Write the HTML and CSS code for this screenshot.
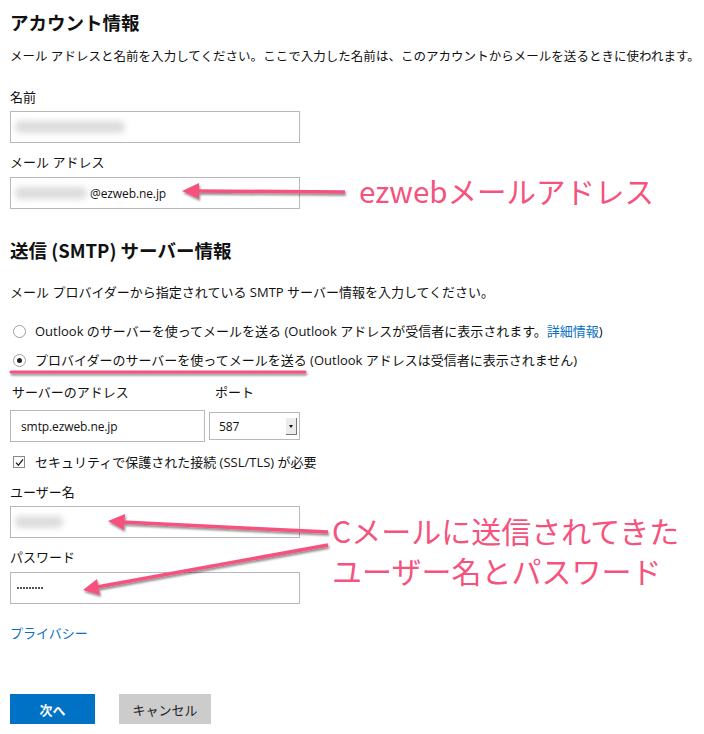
FILE: index.html
```html
<!DOCTYPE html>
<html lang="ja">
<head>
  <meta charset="UTF-8">
  <meta name="viewport" content="width=device-width, initial-scale=1.0">
  <title>アカウント情報</title>
  <link rel="stylesheet" href="styles.css">
</head>
<body>

  <div class="page">
      <h1>アカウント情報</h1>
      <p class="desc">メール アドレスと名前を入力してください。ここで入力した名前は、このアカウントからメールを送るときに使われます。</p>

      <div class="field first">
          <label>名前</label>
          <div class="box"><span class="blur name-blur"></span></div>
      </div>

      <div class="field">
          <label>メール アドレス</label>
          <div class="box"><span class="blur mail-blur"></span><span class="val">@ezweb.ne.jp</span></div>
      </div>

      <h2>送信 (SMTP) サーバー情報</h2>
      <p class="desc desc2">メール プロバイダーから指定されている SMTP サーバー情報を入力してください。</p>

      <div class="option first-option">
          <span class="radio"></span>
          <span>Outlook のサーバーを使ってメールを送る (Outlook アドレスが受信者に表示されます。<a href="#">詳細情報</a>)</span>
      </div>
      <div class="option">
          <span class="radio checked"></span>
          <span>プロバイダーのサーバーを使ってメールを送る (Outlook アドレスは受信者に表示されません)</span>
      </div>

      <div class="server-row">
          <div class="server-col">
              <label>サーバーのアドレス</label>
              <div class="box server-box"><span class="val">smtp.ezweb.ne.jp</span></div>
          </div>
          <div class="port-col">
              <label>ポート</label>
              <div class="select"><span class="val">587</span><span class="drop"></span></div>
          </div>
      </div>

      <div class="option check-row">
          <span class="check">
              <svg width="9" height="9" viewBox="0 0 9 9"><path d="M1 4.6 L3.4 7.2 L8 1.4" fill="none" stroke="#222" stroke-width="1.3"/></svg>
          </span>
          <span>セキュリティで保護された接続 (SSL/TLS) が必要</span>
      </div>

      <div class="field user-field">
          <label>ユーザー名</label>
          <div class="box"><span class="blur user-blur"></span></div>
      </div>

      <div class="field">
          <label>パスワード</label>
          <div class="box"><span class="dots"></span></div>
      </div>

      <a href="#" class="privacy">プライバシー</a>

      <div class="buttons">
          <button class="btn next">次へ</button>
          <button class="btn cancel">キャンセル</button>
      </div>
  </div>

  <!-- pink annotations drawn on top of the screenshot -->
  <div class="notes">
      <svg class="arrows" width="704" height="734" viewBox="0 0 704 734">
          <defs>
              <filter id="shade" x="-10%" y="-50%" width="120%" height="200%">
                  <feDropShadow dx="1" dy="2" stdDeviation="1" flood-color="#000" flood-opacity="0.45"/>
              </filter>
          </defs>
          <g filter="url(#shade)" fill="#f5527d" stroke="#f5527d">
              <line x1="11" y1="372" x2="305" y2="372" stroke-width="3" stroke-linecap="round"/>
              <line x1="196" y1="191" x2="345" y2="192" stroke-width="3.5"/>
              <polygon points="182,191 199,183 199,199" stroke="none"/>
              <line x1="122" y1="522" x2="328" y2="532" stroke-width="3.5"/>
              <polygon points="108,521 125,514 124,530" stroke="none"/>
              <line x1="97" y1="587" x2="328" y2="545" stroke-width="3.5"/>
              <polygon points="83,590 97,579 100,595" stroke="none"/>
          </g>
      </svg>
      <p class="note note-mail">ezwebメールアドレス</p>
      <p class="note note-user">Cメールに送信されてきた<br>ユーザー名とパスワード</p>
  </div>

</body>
</html>
```

FILE: styles.css
```css
* {
  margin: 0;
  padding: 0;
  box-sizing: border-box;
}

body {
  font-family: "Open Sans", "Noto Sans CJK JP", sans-serif;
  font-size: 13px;
  color: #111;
  background-color: white;
  position: relative;
  width: 704px;
  height: 734px;
  overflow: hidden;
}

.page {
  padding: 10px 0 0 10px;
}

h1, h2 {
  font-family: "Noto Sans CJK JP", sans-serif;
  font-size: 18.5px;
  font-weight: bold;
  line-height: 24px;
  color: #111;
}

h2 {
  margin-top: 29px;
}

.desc {
  font-size: 12.5px;
  line-height: 20px;
  margin-top: 13px;
  letter-spacing: 0.03px;
}

.desc2 {
  font-size: 13px;
  letter-spacing: 0;
  margin-top: 20px;
}

.field {
  margin-top: 9px;
}

.field.first {
  margin-top: 20px;
}

.field label,
.server-row label {
  display: block;
  line-height: 20px;
  margin-bottom: 5px;
}

.field.first label {
  margin-bottom: 4px;
}

.box {
  width: 290px;
  height: 32px;
  border: 1px solid #b9b9b9;
  display: flex;
  align-items: center;
  padding-left: 4px;
}

.val {
  font-size: 12px;
  letter-spacing: -0.1px;
}

.blur {
  display: inline-block;
  height: 12px;
  background-color: #dcdcdc;
  border-radius: 5px;
  filter: blur(3px);
}

.name-blur {
  width: 110px;
}

.mail-blur {
  width: 72px;
  margin-right: 3px;
}

.user-blur {
  width: 48px;
}

.dots {
  display: inline-block;
  width: 26px;
  height: 2px;
  margin-left: 2px;
  background: repeating-linear-gradient(to right, #555 0 2px, transparent 2px 3px);
}

.option {
  display: flex;
  align-items: center;
  line-height: 20px;
  margin-top: 9px;
}

.first-option {
  margin-top: 19px;
}

.radio {
  width: 13px;
  height: 13px;
  border: 1px solid #a0a0a0;
  border-radius: 50%;
  margin: 0 9px 0 3px;
  display: flex;
  justify-content: center;
  align-items: center;
}

.radio.checked::after {
  content: "";
  width: 5px;
  height: 5px;
  border-radius: 50%;
  background-color: #222;
}

.option a,
.privacy {
  color: #0a6fc4;
  text-decoration: none;
}

.server-row {
  display: flex;
  align-items: flex-end;
  margin-top: 12px;
}

.server-row label {
  padding-left: 2px;
  margin-bottom: 8px;
}

.server-box {
  width: 195px;
  padding-left: 10px;
}

.port-col {
  margin-left: 4px;
  padding-bottom: 2px;
}

.port-col label {
  padding-left: 6px;
  margin-bottom: 10px;
}

.select {
  width: 91px;
  height: 28px;
  border: 1px solid #b9b9b9;
  display: flex;
  align-items: center;
  justify-content: space-between;
  padding: 0 2px 0 9px;
}

.drop {
  width: 11px;
  height: 17px;
  background-color: #ececec;
  border-right: 1px solid #777;
  border-bottom: 1px solid #777;
  position: relative;
}

.drop::after {
  content: "";
  position: absolute;
  top: 7px;
  left: 3px;
  border-left: 2.5px solid transparent;
  border-right: 2.5px solid transparent;
  border-top: 3px solid #111;
}

.check-row {
  margin-top: 10px;
}

.check {
  width: 12px;
  height: 12px;
  border: 1px solid #8a8a8a;
  margin: 0 10px 0 3px;
  display: flex;
  justify-content: center;
  align-items: center;
}

.user-field {
  margin-top: 10px;
}

.user-field label {
  margin-bottom: 4px;
}

.privacy {
  display: block;
  line-height: 20px;
  margin-top: 19px;
}

.buttons {
  display: flex;
  gap: 24px;
  margin-top: 51px;
}

.btn {
  height: 30px;
  border: none;
  font-family: "Noto Sans CJK JP", sans-serif;
  font-size: 13px;
}

.next {
  width: 85px;
  background-color: #0072c6;
  color: white;
  font-weight: bold;
}

.cancel {
  width: 92px;
  background-color: #cccccc;
  color: #222;
}

.notes {
  position: absolute;
  top: 0;
  left: 0;
  width: 704px;
  height: 734px;
  pointer-events: none;
}

.arrows {
  position: absolute;
  top: 0;
  left: 0;
}

.note {
  position: absolute;
  font-family: "Noto Sans CJK JP", sans-serif;
  color: #f5527d;
  white-space: nowrap;
}

.note-mail {
  left: 359px;
  top: 169px;
  font-size: 29.5px;
  line-height: 42px;
}

.note-user {
  left: 332px;
  top: 510px;
  font-size: 30px;
  line-height: 40px;
}
```
